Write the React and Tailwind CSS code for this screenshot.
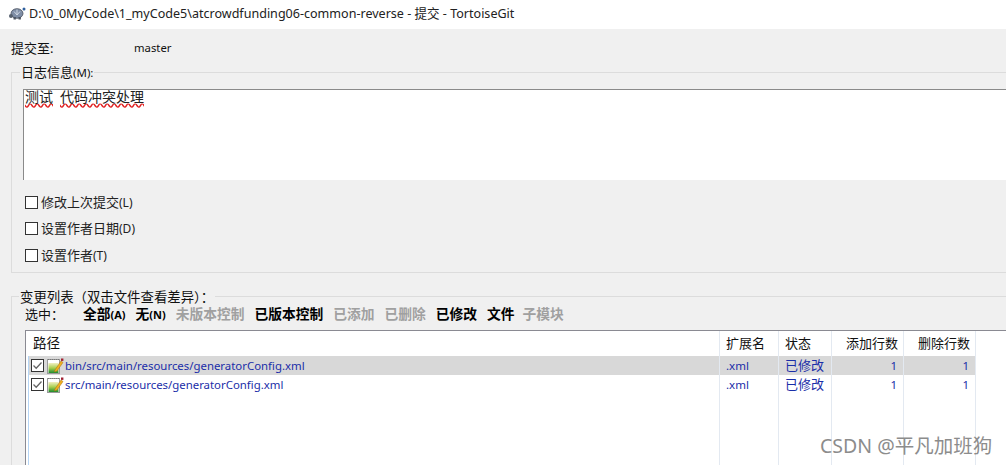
const cjk = { fontFamily: '"Noto Sans", "Noto Sans CJK SC", sans-serif' };

function Turtle() {
  return (
    <svg width="18" height="16" viewBox="0 0 18 16" className="shrink-0 -mt-[1px]">
      <ellipse cx="9" cy="7.5" rx="6" ry="4.8" fill="#7f8ea6" stroke="#454d5a" strokeWidth="0.8" />
      <path d="M6 5.5 L9 9 L12 5.5 M9 3.5 V9" stroke="#d5dce8" strokeWidth="0.9" fill="none" />
      <circle cx="3" cy="10" r="2" fill="#56606e" />
      <rect x="5.5" y="11" width="2.4" height="2.5" fill="#4d5663" />
      <rect x="10.5" y="11" width="2.4" height="2.5" fill="#4d5663" />
      <circle cx="16" cy="3" r="1.5" fill="#2f5f9e" />
    </svg>
  );
}

function Box() {
  return <span className="w-[13px] h-[13px] border border-[#333] bg-white shrink-0" />;
}

function CheckMark() {
  return (
    <svg width="13" height="13" viewBox="0 0 13 13" className="shrink-0">
      <rect x="0.5" y="0.5" width="12" height="12" fill="#fff" stroke="#333" />
      <path d="M2.5 6.5 L5.2 9.2 L10.5 3.5" stroke="#666" strokeWidth="1.3" fill="none" />
    </svg>
  );
}

function FileIcon() {
  return (
    <svg width="17" height="16" viewBox="0 0 17 16" className="shrink-0">
      <defs>
        <linearGradient id="g" x1="0" y1="0" x2="0" y2="1">
          <stop offset="0" stopColor="#f2efc0" />
          <stop offset="0.5" stopColor="#a8cf50" />
          <stop offset="1" stopColor="#1e8a2c" />
        </linearGradient>
      </defs>
      <rect x="0.5" y="1.5" width="12" height="14" fill="#fff" stroke="#999" />
      <rect x="1.5" y="5" width="10" height="10" fill="url(#g)" />
      <path d="M1 1.5 h11" stroke="#777" strokeDasharray="1 1" />
      <path d="M8 12 L14 3 L16 4.5 L10 13 L7.5 14 Z" fill="#f0b020" stroke="#a86c10" strokeWidth="0.5" />
      <rect x="14" y="0.5" width="2.4" height="2.4" fill="#a02030" />
    </svg>
  );
}

function CheckRow({ label, hot }) {
  return (
    <div className="flex items-center gap-[3px] h-[26.5px] text-[13px] text-[#222]">
      <Box />
      <span>{label}<span className="text-[12px]">{hot}</span></span>
    </div>
  );
}

function Filter({ children, hot, off }) {
  return (
    <span className={off ? "font-bold text-[#a0a0a0]" : "font-bold text-black"}>
      {children}
      {hot ? <span className="text-[11px]">{hot}</span> : null}
    </span>
  );
}

const colClass = "shrink-0 h-full border-r border-[#e3e9f1] px-[6px]";

function Row({ name, selected }) {
  return (
    <div className={selected ? "flex h-[19px] bg-[#d8d8d8] items-center text-[11.5px] text-[#1a2ea8]" : "flex h-[19px] items-center text-[11.5px] text-[#1a2ea8]"}>
      <div className="w-[691px] h-full shrink-0 flex items-center gap-[3px] pl-[2px] border-r border-[#e3e9f1]">
        <CheckMark />
        <FileIcon />
        <span className="ml-[-2px] text-[11.4px]">{name}</span>
      </div>
      <div className={`${colClass} w-[59px] flex items-center`}>.xml</div>
      <div className={`${colClass} w-[53px] flex items-center text-[13px]`}>已修改</div>
      <div className={`${colClass} w-[72px] flex items-center justify-end`}>1</div>
      <div className={`${colClass} w-[72px] flex items-center justify-end`}>1</div>
    </div>
  );
}

export default function App() {
  return (
    <div style={cjk} className="relative w-[1006px] h-[465px] overflow-hidden bg-[#f0f0f0] text-[12px] text-[#111]">
      <div className="h-[29px] bg-white flex items-center pl-[8px] gap-[3px] text-[12.55px] text-[#222]">
        <Turtle />
        <span className="whitespace-nowrap">D:\0_0MyCode\1_myCode5\atcrowdfunding06-common-reverse - 提交 - TortoiseGit</span>
      </div>

      <div className="h-[43px] flex items-center pl-[11px] pb-[4px]">
        <span className="w-[123px] text-[13px]">提交至:</span>
        <span className="text-[11.3px]">master</span>
      </div>

      <div className="ml-[11px] h-[201px] border-l border-t border-b border-[#dcdcdc]">
        <div className="h-[26px] -mt-[10px] pl-[8px]">
          <span className="bg-[#f0f0f0] px-[1px] text-[13px] leading-[18px] block w-fit">日志信息<span className="text-[11.5px]">(M):</span></span>
        </div>
        <div className="ml-[11px] h-[91px] bg-white border-l border-t border-[#8a8a8a] pl-[1px] text-[14px] leading-[14px] text-[#222]">
          <span className="underline decoration-wavy decoration-[#e02020]">测试</span>
          <span className="ml-[7px] underline decoration-wavy decoration-[#e02020]">代码冲突处理</span>
        </div>
        <div className="ml-[13px] mt-[9px]">
          <CheckRow label="修改上次提交" hot="(L)" />
          <CheckRow label="设置作者日期" hot="(D)" />
          <CheckRow label="设置作者" hot="(T)" />
        </div>
      </div>

      <div className="ml-[11px] mt-[23px] border-l border-t border-[#dcdcdc] h-[170px]">
        <div className="-mt-[9px] h-[18px] pl-[7px]">
          <span className="bg-[#f0f0f0] px-[1px] text-[13.4px] leading-[18px] block w-fit">变更列表（双击文件查看差异）：</span>
        </div>
        <div className="flex items-center h-[17px] pl-[13px] text-[13.75px] whitespace-nowrap">
          <span className="w-[58px] text-[13px]">选中：</span>
          <div className="flex gap-[10px]">
            <Filter hot="(A)">全部</Filter>
            <Filter hot="(N)">无</Filter>
            <Filter off>未版本控制</Filter>
            <Filter>已版本控制</Filter>
            <Filter off>已添加</Filter>
            <Filter off>已删除</Filter>
            <Filter>已修改</Filter>
            <Filter>文件</Filter>
            <span className="-ml-[2px]"><Filter off>子模块</Filter></span>
          </div>
        </div>
        <div className="ml-[13px] mt-[7px] h-[140px] bg-white border-l border-t border-[#8a8a92]">
          <div className="flex h-[25px] items-center text-[13px] text-[#111]">
            <div className="w-[694px] h-full flex items-center shrink-0 pl-[7px] text-[13.5px] border-r border-[#e3e9f1]">路径</div>
            <div className={`${colClass} w-[59px] flex items-center`}>扩展名</div>
            <div className={`${colClass} w-[53px] flex items-center`}>状态</div>
            <div className={`${colClass} w-[72px] flex items-center justify-end !pr-[5px]`}>添加行数</div>
            <div className={`${colClass} w-[72px] flex items-center justify-end !pr-[5px]`}>删除行数</div>
          </div>
          <div className="border-l border-[#b5d5f5] ml-[2px] h-[114px] relative">
            <div className="w-[947px]">
              <Row name="bin/src/main/resources/generatorConfig.xml" selected />
              <Row name="src/main/resources/generatorConfig.xml" />
            </div>
            <div className="absolute left-[690px] top-[38px] bottom-0 flex">
              <div className="w-[60px] border-l border-r border-[#e3e9f1]" />
              <div className="w-[53px] border-r border-[#e3e9f1]" />
              <div className="w-[72px] border-r border-[#e3e9f1]" />
              <div className="w-[72px] border-r border-[#e3e9f1]" />
            </div>
          </div>
        </div>
      </div>

      <div className="absolute left-[820px] top-[434px] text-[19.5px] leading-[24px] text-[#8c8c8c] whitespace-nowrap">CSDN @平凡加班狗</div>
    </div>
  );
}
